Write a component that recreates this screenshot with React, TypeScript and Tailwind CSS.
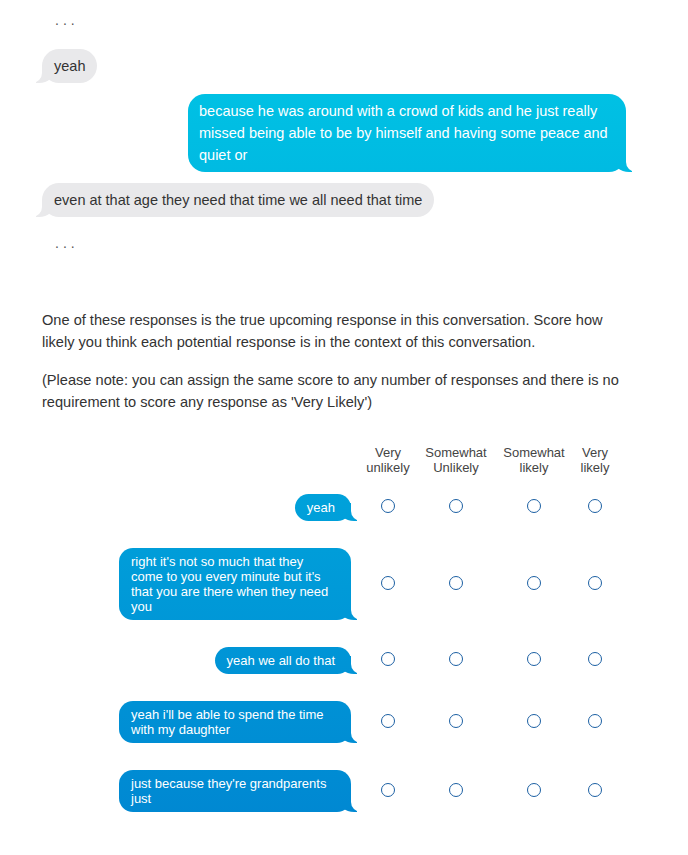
import React from "react";

const conversation = [
  { from: "them", text: "yeah" },
  {
    from: "me",
    text: "because he was around with a crowd of kids and he just really missed being able to be by himself and having some peace and quiet or",
  },
  { from: "them", text: "even at that age they need that time we all need that time" },
];

const answers = [
  "yeah",
  "right it's not so much that they come to you every minute but it's that you are there when they need you",
  "yeah we all do that",
  "yeah i'll be able to spend the time with my daughter",
  "just because they're grandparents just",
];

const labels = [
  ["Very", "unlikely"],
  ["Somewhat", "Unlikely"],
  ["Somewhat", "likely"],
  ["Very", "likely"],
];

const blue = "bg-fixed bg-linear-to-b from-[#00c8e6] to-[#0085d1]";
const grid = "grid grid-cols-[320px_52px_84px_72px_50px]";

function Dots() {
  return (
    <div className="h-[22px] pl-[13px] text-[14px] leading-[22px] tracking-[4px] text-[#555]">
      ...
    </div>
  );
}

// tail at the bottom right, the white block carves the outer curve
function TailRight() {
  return (
    <>
      <div className={`absolute bottom-0 right-[-6px] h-[18px] w-[19px] rounded-bl-[16px_14px] ${blue}`} />
      <div className="absolute bottom-0 right-[-26px] h-[20px] w-[26px] rounded-bl-[10px] bg-white" />
    </>
  );
}

function TailLeft() {
  return (
    <>
      <div className="absolute bottom-0 left-[-6px] h-[18px] w-[19px] rounded-br-[16px_14px] bg-[#e9e9eb]" />
      <div className="absolute bottom-0 left-[-26px] h-[20px] w-[26px] rounded-br-[10px] bg-white" />
    </>
  );
}

function Radio({ name }: { name: string }) {
  return (
    <div className="flex items-center justify-center">
      <input
        type="radio"
        name={name}
        className="mb-[3px] h-[14px] w-[14px] appearance-none rounded-full border-[1.5px] border-[#1b5fa3] bg-white"
      />
    </div>
  );
}

export default function App() {
  return (
    <div className="min-h-screen bg-white font-['Liberation_Sans',Arial,sans-serif] text-[#333]">
      <div className="ml-[42px] flex w-[584px] flex-col pt-[9px]">
        <Dots />

        {/* conversation so far */}
        <div className="mt-[18px] flex flex-col gap-[11px]">
          {conversation.map((m, i) =>
            m.from === "me" ? (
              <div
                key={i}
                className={`relative max-w-[438px] self-end rounded-[17px] px-[11px] py-[6px] text-[14.5px] leading-[22px] text-white ${blue}`}
              >
                <span className="relative z-10">{m.text}</span>
                <TailRight />
              </div>
            ) : (
              <div
                key={i}
                className="relative max-w-[438px] self-start rounded-[17px] bg-[#e9e9eb] px-3 py-[6px] text-[14.5px] leading-[22px] text-[#333]"
              >
                <span className="relative z-10">{m.text}</span>
                <TailLeft />
              </div>
            ),
          )}
        </div>

        <div className="mt-[15px]">
          <Dots />
        </div>

        {/* instructions */}
        <div className="mt-[55px] text-[14.6px] leading-[22px] text-[#333]">
          <p>
            One of these responses is the true upcoming response in this conversation. Score how
            likely you think each potential response is in the context of this conversation.
          </p>
          <p className="mt-4">
            (Please note: you can assign the same score to any number of responses and there is no
            requirement to score any response as 'Very Likely')
          </p>
        </div>

        {/* scoring table */}
        <div className={`${grid} mt-[32px] text-[13px] leading-[15px] text-[#444]`}>
          <div />
          {labels.map((l) => (
            <div key={l.join(" ")} className="text-center">
              {l[0]}
              <br />
              {l[1]}
            </div>
          ))}
        </div>

        <div className="mt-[19px] flex flex-col gap-[27px]">
          {answers.map((a, i) => (
            <div key={i} className={grid}>
              <div className="flex justify-end pr-[11px]">
                <div
                  className={`relative max-w-[232px] rounded-[14px] py-[6px] pl-3 pr-4 text-[13px] leading-[15px] text-white ${blue}`}
                >
                  <span className="relative z-10">{a}</span>
                  <TailRight />
                </div>
              </div>
              {labels.map((_, j) => (
                <Radio key={j} name={`r${i}`} />
              ))}
            </div>
          ))}
        </div>
      </div>
    </div>
  );
}
